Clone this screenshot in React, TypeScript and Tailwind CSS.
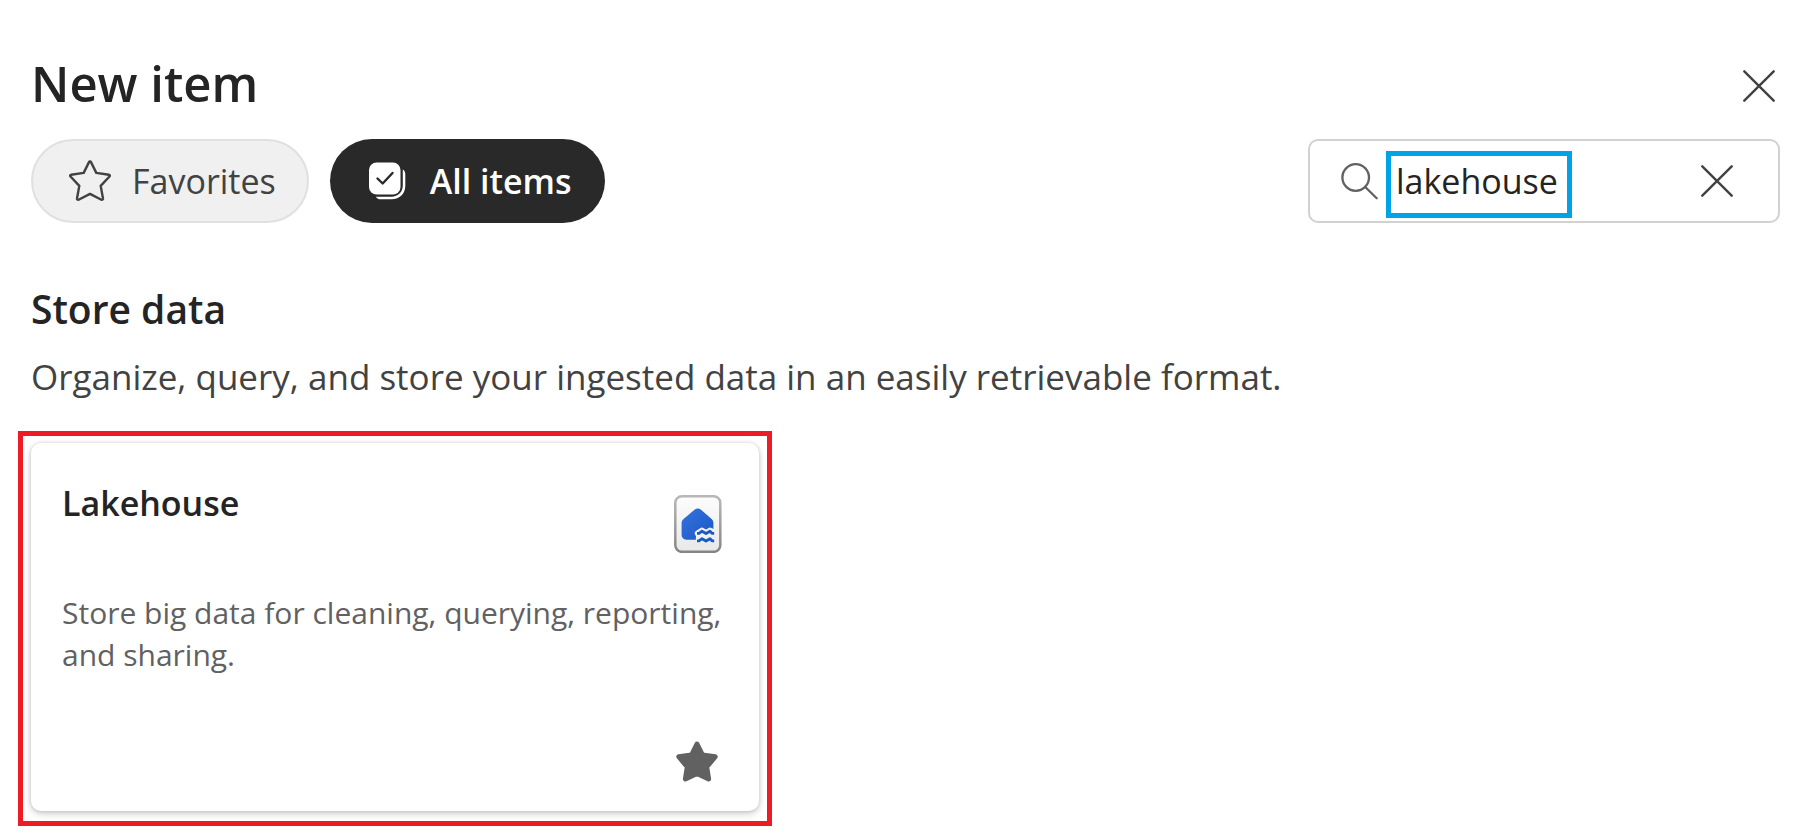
import { useState } from "react";

function Cross() {
  return (
    <svg viewBox="0 0 32 32" className="size-8" fill="none" stroke="currentColor" strokeWidth="2.4" strokeLinecap="round" aria-hidden="true">
      <path d="M1.3 1.3 30.7 30.7M30.7 1.3 1.3 30.7" />
    </svg>
  );
}

function StarOutline() {
  return (
    <svg viewBox="0 0 42 42" className="size-[42px]" fill="none" stroke="currentColor" strokeWidth="2.4" strokeLinejoin="round" aria-hidden="true">
      <path d="M20 2.100c.4-.8 1.600-.8 2 0l5.300 10.800 12.600 1.800c.9.100 1.200 1.200.6 1.800L31.700 25.900l2.300 12.600c.200.9-.8 1.600-1.600 1.200L21 33.900 9.600 39.700c-.8.4-1.800-.3-1.600-1.200l2.300-12.600L1.500 16.500c-.6-.6-.3-1.700.6-1.800l12.600-1.800z" />
    </svg>
  );
}

function StarFilled() {
  return (
    <svg viewBox="0 0 42 42" className="size-[42px]" fill="currentColor" stroke="currentColor" strokeWidth="5" strokeLinejoin="round" aria-hidden="true">
      <path d="M21 3 26.500 14.100 39.200 15.700 30.700 26 32.600 38 21 32.500 9.400 38 11.300 26 2.800 15.700 15.500 14.100z" />
    </svg>
  );
}

function StackCheck() {
  return (
    <svg viewBox="0 0 38 38" className="size-[38px]" fill="none" aria-hidden="true">
      <rect x="1" y="0.500" width="31.500" height="32" rx="7.500" fill="#fff" />
      <path d="m9.500 16.500 5.200 5L24.500 11" stroke="#292929" strokeWidth="2.400" strokeLinecap="round" strokeLinejoin="round" />
      <path d="M34.800 7.500c1.700 1 2.500 2.600 2.500 4.500v11.500C37.300 31.800 31.800 37.300 23.500 37.300H13c-2.300 0-4.200-.9-5.300-2.600h15.800c6.500 0 11.300-4.700 11.300-11.200z" fill="#fff" />
    </svg>
  );
}

function Magnifier() {
  return (
    <svg viewBox="0 0 37 37" className="size-[37px] text-[#616161]" fill="none" stroke="currentColor" strokeWidth="2.300" strokeLinecap="round" aria-hidden="true">
      <circle cx="14.700" cy="14.500" r="13.300" />
      <path d="m24.500 24.300 11.200 11" />
    </svg>
  );
}

function LakehouseIcon() {
  return (
    <svg viewBox="0 0 48 58" className="h-[58px] w-12" fill="none" aria-hidden="true">
      <defs>
        <linearGradient id="paper" x1="0" y1="0" x2="0" y2="1">
          <stop stopColor="#fdfdfd" />
          <stop offset="1" stopColor="#e8e8e8" />
        </linearGradient>
        <linearGradient id="edge" x1="0" y1="0" x2="0" y2="1">
          <stop stopColor="#b8b8b8" />
          <stop offset="1" stopColor="#858585" />
        </linearGradient>
        <linearGradient id="house" x1="0" y1="0" x2="1" y2="1">
          <stop stopColor="#3372df" />
          <stop offset="1" stopColor="#1c58c2" />
        </linearGradient>
      </defs>
      <rect x="1.300" y="1.300" width="45" height="55.500" rx="6.500" fill="url(#paper)" stroke="url(#edge)" strokeWidth="2.500" />
      <path d="M20.500 14.800c2-1.700 4.500-1.700 6.500 0l10.600 9.200c1.200 1.100 1.800 2.500 1.800 4.200V36H22v8.800h-9.700c-2.700 0-4.700-2-4.700-4.700V28.200c0-1.700.7-3.100 1.900-4.200z" fill="url(#house)" />
      <path d="M24 38.500 28 35.800 32 38.500 36 35.800 39.500 37.500M25 43.500h5" stroke="#f1f1f1" strokeWidth="6.400" strokeLinecap="round" strokeLinejoin="round" />
      <path d="M23 38.300h2l3-2.100 4 2.300 4-2.300 2 2.100h2.200M23 45.800h2l3-2.100 4 2.300 4-2.300 2 2.100h2.200" stroke="#1c5abf" strokeWidth="2.800" strokeLinejoin="round" />
    </svg>
  );
}

export default function App() {
  const [query, setQuery] = useState("lakehouse");

  return (
    <main className="min-h-screen bg-white pt-[51px] pb-3 font-['Open_Sans','Noto_Sans',sans-serif] text-[#242424]">
      <header className="flex h-[70px] justify-between pr-[33px] pl-[31px]">
        <h1 className="text-[49px] leading-[64px] font-semibold">New item</h1>
        <button type="button" aria-label="Close" className="text-[#424242]">
          <Cross />
        </button>
      </header>

      <div className="mt-[18px] flex items-center justify-between pr-7 pl-[31px]">
        <div className="flex gap-[21px]">
          <button type="button" className="flex h-[84px] items-center gap-[21px] rounded-full border-2 border-[#e0e0e0] bg-[#f0f0f0] pr-[31px] pl-9 text-[34px] leading-[48px] text-[#424242]">
            <StarOutline />
            Favorites
          </button>
          <button type="button" className="flex h-[84px] items-center gap-6 rounded-full bg-[#292929] pr-[33px] pl-[38px] text-[34px] leading-[48px] font-semibold text-white">
            <StackCheck />
            All items
          </button>
        </div>

        <div className="flex h-[84px] w-[472px] items-center rounded-[10px] border-2 border-[#d1d1d1] pr-[45px] pl-[31px]">
          <Magnifier />
          <div className="relative ml-2 h-full w-[186px]">
            <input
              type="text"
              aria-label="Search items"
              value={query}
              onChange={(event) => setQuery(event.target.value)}
              className="h-full w-full bg-transparent px-[10px] text-[34px] leading-[48px] outline-none"
            />
            <span className="pointer-events-none absolute inset-x-0 top-[10px] bottom-[3px] border-5 border-[#00a2e8]" />
          </div>
          <button type="button" aria-label="Clear search" className="ml-auto text-[#424242]" onClick={() => setQuery("")}>
            <Cross />
          </button>
        </div>
      </div>

      <section className="mt-[58px]">
        <h2 className="px-[31px] text-[39px] leading-[56px] font-semibold">Store data</h2>
        <p className="mt-4 px-[31px] text-[35px] leading-[48px] text-[#424242]">
          Organize, query, and store your ingested data in an easily retrievable format.
        </p>

        <div className="mt-[30px] ml-[18px] w-[754px] max-w-full border-5 border-[#ed1c24] px-2 pt-[7px] pb-[10px]">
          <article className="flex min-h-[368px] flex-col rounded-[10px] bg-white pt-9 pb-7 pl-[31px] shadow-[0_3px_7px_rgba(0,0,0,0.18),0_0_4px_rgba(0,0,0,0.14)]">
            <div className="flex items-start justify-between pr-[37px]">
              <h3 className="text-[34px] leading-[48px] font-semibold">Lakehouse</h3>
              <div className="pt-4">
                <LakehouseIcon />
              </div>
            </div>
            <p className="mt-[39px] pr-8 text-[30px] leading-[42px] text-[#616161]">
              Store big data for cleaning, querying, reporting, and sharing.
            </p>
            <button type="button" aria-label="Remove Lakehouse from favorites" className="mt-auto mr-[41px] self-end text-[#616161]">
              <StarFilled />
            </button>
          </article>
        </div>
      </section>
    </main>
  );
}
